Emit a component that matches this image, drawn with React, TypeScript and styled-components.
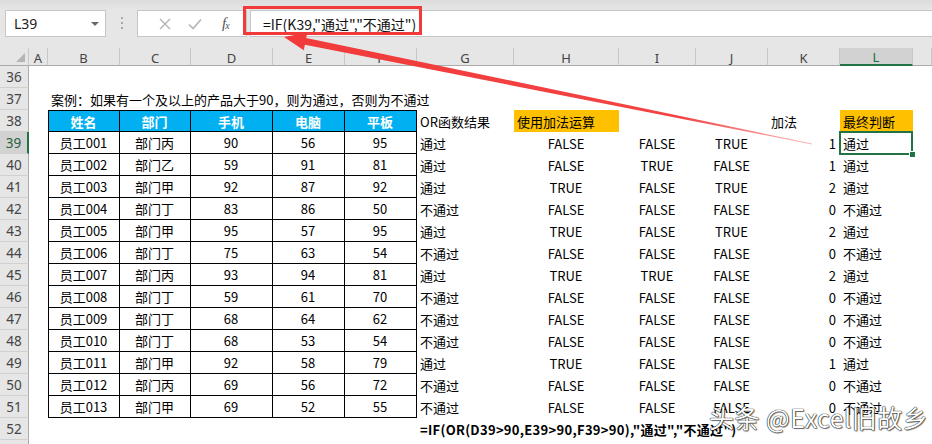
import React from 'react';
import styled, { createGlobalStyle, css } from 'styled-components';

const GlobalStyle = createGlobalStyle`
  html, body { margin: 0; padding: 0; background: #fff; }
  body { font-family: "Noto Sans CJK SC", "Noto Sans", sans-serif; }
  #root { width: 932px; height: 444px; }
`;

const COLS = [29, 19, 72, 71, 82, 72, 72, 97, 105, 77, 72, 72, 73, 19];
const LETTERS = ['', 'A', 'B', 'C', 'D', 'E', 'F', 'G', 'H', 'I', 'J', 'K', 'L', ''];
const GREEN = '#217346';
const RED = '#f23a3a';

const Frame = styled.div`
  position: relative;
  width: 932px;
  height: 444px;
  overflow: hidden;
  background: #fff;
`;

const FormulaBar = styled.div`
  height: 48px;
  box-sizing: border-box;
  padding-top: 10px;
  display: flex;
  align-items: flex-start;
  background: linear-gradient(#dcdcdc 0px, #e6e6e6 10px, #e6e6e6 100%);
`;

const NameBox = styled.div`
  margin-left: 5px;
  width: 101px;
  height: 27px;
  box-sizing: border-box;
  background: #fff;
  border: 1px solid #c6c6c6;
  display: flex;
  align-items: center;
  justify-content: space-between;
  padding: 0 6px 0 8px;
  font-family: "Noto Sans", sans-serif;
  font-size: 14px;
  color: #222;
`;

const Caret = styled.span`
  width: 0;
  height: 0;
  border-left: 4px solid transparent;
  border-right: 4px solid transparent;
  border-top: 4px solid #6a6a6a;
`;

const Grip = styled.div`
  width: 2px;
  margin: 7px 14px 0 15px;
  display: flex;
  flex-direction: column;
  gap: 3px;
  span {
    display: block;
    width: 2px;
    height: 2px;
    background: #a8a8a8;
  }
`;

const ButtonsBox = styled.div`
  width: 110px;
  height: 27px;
  box-sizing: border-box;
  background: #fff;
  border: 1px solid #c6c6c6;
  display: flex;
  align-items: center;
  padding: 0 6px 0 12px;
`;

const IconSlot = styled.span<{ $w: number }>`
  width: ${(p) => p.$w}px;
  display: flex;
  align-items: center;
  justify-content: center;
`;

const Fx = styled.span`
  font-family: "Liberation Serif", serif;
  font-style: italic;
  font-size: 15px;
  color: #555;
  letter-spacing: -1px;
  sub {
    font-size: 10px;
    vertical-align: -1px;
  }
`;

const FormulaInput = styled.div`
  flex: 1;
  margin-left: 3px;
  height: 27px;
  box-sizing: border-box;
  background: #fff;
  border: 1px solid #c6c6c6;
  border-right: none;
  display: flex;
  align-items: center;
  padding-left: 12px;
  font-size: 14px;
  color: #111;
`;

const RedBox = styled.div`
  position: absolute;
  left: 243px;
  top: 6px;
  width: 179px;
  height: 29px;
  box-sizing: border-box;
  border: 3px solid ${RED};
  pointer-events: none;
`;

const Sheet = styled.div`
  display: grid;
  grid-template-columns: ${COLS.map((c) => c + 'px').join(' ')};
  grid-template-rows: 18px repeat(18, 22px);
  background: #fff;
`;

const Corner = styled.div`
  position: relative;
  background: #e6e6e6;
  border-right: 1px solid #c8c8c8;
  border-bottom: 1px solid #ababab;
  &::after {
    content: '';
    position: absolute;
    right: 3px;
    bottom: 3px;
    width: 0;
    height: 0;
    border-left: 9px solid transparent;
    border-bottom: 9px solid #b5b5b5;
  }
`;

const ColHead = styled.div<{ $active?: boolean }>`
  box-sizing: border-box;
  background: ${(p) => (p.$active ? '#d2d2d2' : '#e6e6e6')};
  border-right: 1px solid #c8c8c8;
  border-bottom: ${(p) => (p.$active ? `2px solid ${GREEN}` : '1px solid #ababab')};
  display: flex;
  align-items: center;
  justify-content: center;
  padding-top: 2px;
  font-family: "Noto Sans", sans-serif;
  font-size: 13px;
  color: ${(p) => (p.$active ? '#1d6a3f' : '#444')};
`;

const RowHead = styled.div<{ $active?: boolean }>`
  box-sizing: border-box;
  background: ${(p) => (p.$active ? '#d2d2d2' : '#e6e6e6')};
  border-right: ${(p) => (p.$active ? `2px solid ${GREEN}` : '1px solid #ababab')};
  border-bottom: 1px solid #d0d0d0;
  display: flex;
  align-items: center;
  justify-content: center;
  font-family: "Noto Sans", sans-serif;
  font-size: 13.5px;
  color: ${(p) => (p.$active ? '#2b5e3f' : '#444')};
`;

type Align = 'l' | 'c' | 'r';

const Cell = styled.div<{
  $a?: Align;
  $fill?: string;
  $color?: string;
  $bold?: boolean;
  $tb?: boolean;
  $tl?: boolean;
  $tt?: boolean;
  $sel?: boolean;
}>`
  position: relative;
  box-sizing: border-box;
  display: flex;
  align-items: center;
  justify-content: ${(p) => (p.$a === 'c' ? 'center' : p.$a === 'r' ? 'flex-end' : 'flex-start')};
  padding: 0 4px 0 3px;
  white-space: nowrap;
  overflow: visible;
  font-size: 13px;
  color: ${(p) => p.$color || '#000'};
  font-weight: ${(p) => (p.$bold ? 700 : 400)};
  background: ${(p) => p.$fill || 'transparent'};
  ${(p) =>
    p.$tb &&
    css`
      border-right: 1px solid #000;
      border-bottom: 1px solid #000;
    `}
  ${(p) => p.$tl && css`border-left: 1px solid #000;`}
  ${(p) => p.$tt && css`border-top: 1px solid #000;`}
  ${(p) =>
    p.$sel &&
    css`
      z-index: 2;
      &::before {
        content: '';
        position: absolute;
        left: -1px;
        top: -1px;
        right: 0;
        bottom: -1px;
        border: 2px solid ${GREEN};
      }
      &::after {
        content: '';
        position: absolute;
        right: -3px;
        bottom: -4px;
        width: 5px;
        height: 5px;
        background: ${GREEN};
        border: 1px solid #fff;
      }
    `}
`;

const FormulaText = styled.span`
  font-weight: 700;
  letter-spacing: 0.3px;
`;

const Watermark = styled.div`
  position: absolute;
  left: 709px;
  top: 399px;
  font-size: 25px;
  color: #fff;
  white-space: nowrap;
  text-shadow: 0 0 1px #000, 0 0 1px #000, 1px 1px 1px rgba(0, 0, 0, 0.5);
  pointer-events: none;
  letter-spacing: 0.5px;
`;

const ArrowLayer = styled.svg`
  position: absolute;
  left: 0;
  top: 0;
  width: 932px;
  height: 444px;
  pointer-events: none;
`;

type Spec = {
  t?: React.ReactNode;
  a?: Align;
  fill?: string;
  color?: string;
  bold?: boolean;
  tb?: boolean;
  tl?: boolean;
  tt?: boolean;
  sel?: boolean;
};

const rows: [string, string, number, number, number, string, string, string, string, number, string][] = [
  ['员工001', '部门丙', 90, 56, 95, '通过', 'FALSE', 'FALSE', 'TRUE', 1, '通过'],
  ['员工002', '部门乙', 59, 91, 81, '通过', 'FALSE', 'TRUE', 'FALSE', 1, '通过'],
  ['员工003', '部门甲', 92, 87, 92, '通过', 'TRUE', 'FALSE', 'TRUE', 2, '通过'],
  ['员工004', '部门丁', 83, 86, 50, '不通过', 'FALSE', 'FALSE', 'FALSE', 0, '不通过'],
  ['员工005', '部门甲', 95, 57, 95, '通过', 'TRUE', 'FALSE', 'TRUE', 2, '通过'],
  ['员工006', '部门丁', 75, 63, 54, '不通过', 'FALSE', 'FALSE', 'FALSE', 0, '不通过'],
  ['员工007', '部门丙', 93, 94, 81, '通过', 'TRUE', 'TRUE', 'FALSE', 2, '通过'],
  ['员工008', '部门丁', 59, 61, 70, '不通过', 'FALSE', 'FALSE', 'FALSE', 0, '不通过'],
  ['员工009', '部门丁', 68, 64, 62, '不通过', 'FALSE', 'FALSE', 'FALSE', 0, '不通过'],
  ['员工010', '部门丁', 68, 53, 54, '不通过', 'FALSE', 'FALSE', 'FALSE', 0, '不通过'],
  ['员工011', '部门甲', 92, 58, 79, '通过', 'TRUE', 'FALSE', 'FALSE', 1, '通过'],
  ['员工012', '部门丙', 69, 56, 72, '不通过', 'FALSE', 'FALSE', 'FALSE', 0, '不通过'],
  ['员工013', '部门甲', 69, 52, 55, '不通过', 'FALSE', 'FALSE', 'FALSE', 0, '不通过'],
];

const CYAN = '#00b0f0';
const ORANGE = '#ffc000';

function buildGrid(): { num: number | null; cells: Spec[] }[] {
  const out: { num: number | null; cells: Spec[] }[] = [];
  const empty = (): Spec[] => Array.from({ length: 13 }, () => ({}));
  out.push({ num: 36, cells: empty() });
  const r37 = empty();
  r37[1] = { t: '案例：如果有一个及以上的产品大于90，则为通过，否则为不通过', a: 'l' };
  out.push({ num: 37, cells: r37 });
  const r38 = empty();
  ['姓名', '部门', '手机', '电脑', '平板'].forEach((h, i) => {
    r38[1 + i] = { t: h, a: 'c', fill: CYAN, color: '#fff', bold: true, tb: true, tt: true, tl: i === 0 };
  });
  r38[6] = { t: 'OR函数结果', a: 'l' };
  r38[7] = { t: '使用加法运算', a: 'l', fill: ORANGE };
  r38[10] = { t: '加法', a: 'l' };
  r38[11] = { t: '最终判断', a: 'l', fill: ORANGE };
  out.push({ num: 38, cells: r38 });
  rows.forEach((r, idx) => {
    const c = empty();
    c[1] = { t: r[0], a: 'c', tb: true, tl: true };
    c[2] = { t: r[1], a: 'c', tb: true };
    c[3] = { t: String(r[2]), a: 'c', tb: true };
    c[4] = { t: String(r[3]), a: 'c', tb: true };
    c[5] = { t: String(r[4]), a: 'c', tb: true };
    c[6] = { t: r[5], a: 'l' };
    c[7] = { t: r[6], a: 'c' };
    c[8] = { t: r[7], a: 'c' };
    c[9] = { t: r[8], a: 'c' };
    c[10] = { t: String(r[9]), a: 'r' };
    c[11] = { t: r[10], a: 'l', sel: idx === 0 };
    out.push({ num: 39 + idx, cells: c });
  });
  const r52 = empty();
  r52[6] = {
    t: <FormulaText>=IF(OR(D39&gt;90,E39&gt;90,F39&gt;90),"通过","不通过")</FormulaText>,
    a: 'l',
  };
  out.push({ num: 52, cells: r52 });
  out.push({ num: null, cells: empty() });
  return out;
}

function Arrow() {
  const T = [284, 37];
  const E = [812, 144];
  const dx = E[0] - T[0];
  const dy = E[1] - T[1];
  const len = Math.hypot(dx, dy);
  const u = [dx / len, dy / len];
  const n = [-u[1], u[0]];
  const HL = 22;
  const HW = 9;
  const SW = 3.4;
  const TW = 0.4;
  const B = [T[0] + HL * u[0], T[1] + HL * u[1]];
  const p = (base: number[], k: number) => `${(base[0] + k * n[0]).toFixed(1)},${(base[1] + k * n[1]).toFixed(1)}`;
  const pts = [`${T[0]},${T[1]}`, p(B, -HW), p(B, -SW), p(E, -TW), p(E, TW), p(B, SW), p(B, HW)].join(' ');
  return (
    <ArrowLayer viewBox="0 0 932 444">
      <defs>
        <linearGradient id="arrowFade" x1={T[0]} y1={T[1]} x2={E[0]} y2={E[1]} gradientUnits="userSpaceOnUse">
          <stop offset="0" stopColor={RED} stopOpacity="1" />
          <stop offset="0.75" stopColor={RED} stopOpacity="0.95" />
          <stop offset="1" stopColor={RED} stopOpacity="0.35" />
        </linearGradient>
      </defs>
      <polygon points={pts} fill="url(#arrowFade)" />
    </ArrowLayer>
  );
}

export default function App() {
  const grid = buildGrid();
  return (
    <Frame>
      <GlobalStyle />
      <FormulaBar>
        <NameBox>
          <span>L39</span>
          <Caret />
        </NameBox>
        <Grip>
          <span />
          <span />
          <span />
        </Grip>
        <ButtonsBox>
          <IconSlot $w={30}>
            <svg width="12" height="12" viewBox="0 0 12 12">
              <path d="M1 1 L11 11 M11 1 L1 11" stroke="#b4b4b4" strokeWidth="1.4" fill="none" />
            </svg>
          </IconSlot>
          <IconSlot $w={32}>
            <svg width="14" height="12" viewBox="0 0 14 12">
              <path d="M1 6.5 L5 10.5 L13 1.5" stroke="#b4b4b4" strokeWidth="1.6" fill="none" />
            </svg>
          </IconSlot>
          <IconSlot $w={30}>
            <Fx>
              f<sub>x</sub>
            </Fx>
          </IconSlot>
        </ButtonsBox>
        <FormulaInput>=IF(K39,"通过","不通过")</FormulaInput>
      </FormulaBar>
      <Sheet>
        <Corner />
        {LETTERS.slice(1).map((l, i) => (
          <ColHead key={'h' + i} $active={l === 'L'}>
            {l}
          </ColHead>
        ))}
        {grid.map((row, ri) => (
          <React.Fragment key={ri}>
            <RowHead $active={row.num === 39}>{row.num ?? ''}</RowHead>
            {row.cells.map((c, i) => (
              <Cell
                key={i}
                $a={c.a}
                $fill={c.fill}
                $color={c.color}
                $bold={c.bold}
                $tb={c.tb}
                $tl={c.tl}
                $tt={c.tt}
                $sel={c.sel}
              >
                {c.t}
              </Cell>
            ))}
          </React.Fragment>
        ))}
      </Sheet>
      <RedBox />
      <Arrow />
      <Watermark>头条 @Excel旧故乡</Watermark>
    </Frame>
  );
}
